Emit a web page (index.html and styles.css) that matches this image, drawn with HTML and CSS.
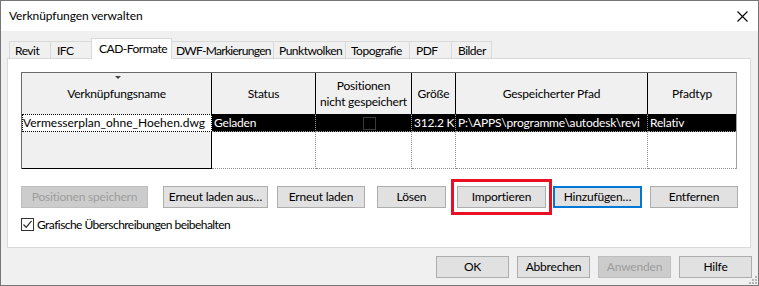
FILE: index.html
```html
<!DOCTYPE html>
<html lang="de">
<head>
  <meta charset="UTF-8" />
  <title>Verknüpfungen verwalten</title>
  <link rel="stylesheet" href="styles.css">
</head>
<body>
  <div class="window">
    <div class="titlebar">
      <span class="title">Verknüpfungen verwalten</span>
      <svg class="close" width="11" height="11" viewBox="0 0 11 11">
        <path d="M0.5 0.5 L10.5 10.5 M10.5 0.5 L0.5 10.5" stroke="#000" stroke-width="1.1" fill="none"/>
      </svg>
    </div>

    <div class="client">
      <div class="tabs">
        <div class="tab tab-revit">Revit</div>
        <div class="tab tab-ifc">IFC</div>
        <div class="tab tab-active">CAD-Formate</div>
        <div class="tab tab-dwf">DWF-Markierungen</div>
        <div class="tab tab-punkt">Punktwolken</div>
        <div class="tab tab-topo">Topografie</div>
        <div class="tab tab-pdf">PDF</div>
        <div class="tab tab-bilder">Bilder</div>
      </div>

      <div class="panel">
        <div class="grid">
          <div class="hcell sortable">Verknüpfungsname<span class="sort-arrow"></span></div>
          <div class="hcell">Status</div>
          <div class="hcell">Positionen<br>nicht gespeichert</div>
          <div class="hcell">Größe</div>
          <div class="hcell">Gespeicherter Pfad</div>
          <div class="hcell last">Pfadtyp</div>

          <div class="cell focus">Vermesserplan_ohne_Hoehen.dwg</div>
          <div class="cell sel">Geladen</div>
          <div class="cell sel center"><span class="mini-box"></span></div>
          <div class="cell sel">312.2 K</div>
          <div class="cell sel">P:\APPS\programme\autodesk\revi</div>
          <div class="cell sel last">Relativ</div>

          <div class="cell rowhead"></div>
          <div class="cell empty"></div>
          <div class="cell empty"></div>
          <div class="cell empty"></div>
          <div class="cell empty"></div>
          <div class="cell empty last"></div>
        </div>

        <div class="actions">
          <button class="btn btn-save" disabled>Positionen speichern</button>
          <button class="btn btn-reload-from">Erneut laden aus…</button>
          <button class="btn btn-reload">Erneut laden</button>
          <button class="btn btn-unload">Lösen</button>
          <button class="btn btn-import">Importieren</button>
          <button class="btn btn-add">Hinzufügen…</button>
          <button class="btn btn-remove">Entfernen</button>
        </div>

        <label class="check">
          <span class="check-box">
            <svg width="11" height="11" viewBox="0 0 11 11">
              <path d="M1.5 5.5 L4.2 8.3 L9.5 1.8" stroke="#222" stroke-width="1.1" fill="none"/>
            </svg>
          </span>
          <span class="check-label">Grafische Überschreibungen beibehalten</span>
        </label>
      </div>

      <div class="footer">
        <button class="btn btn-footer">OK</button>
        <button class="btn btn-footer">Abbrechen</button>
        <button class="btn btn-footer" disabled>Anwenden</button>
        <button class="btn btn-footer">Hilfe</button>
      </div>
    </div>

    <svg class="grip" width="9" height="9" viewBox="0 0 9 9">
      <rect x="7" y="1" width="2" height="2" fill="#b4b4b4"/>
      <rect x="4" y="4" width="2" height="2" fill="#b4b4b4"/>
      <rect x="7" y="4" width="2" height="2" fill="#b4b4b4"/>
      <rect x="1" y="7" width="2" height="2" fill="#b4b4b4"/>
      <rect x="4" y="7" width="2" height="2" fill="#b4b4b4"/>
      <rect x="7" y="7" width="2" height="2" fill="#b4b4b4"/>
    </svg>
  </div>
</body>
</html>
```

FILE: styles.css
```css
body {
    margin: 0;
    font-family: Lato, 'Noto Sans', sans-serif;
    font-size: 12px;
    letter-spacing: -0.2px;
    color: #000;
    background: #fff;
}
.window {
    width: 759px;
    height: 286px;
    box-sizing: border-box;
    border: 1px solid #767676;
    display: flex;
    flex-direction: column;
    position: relative;
}
.titlebar {
    height: 30px;
    background: #fff;
    display: flex;
    align-items: center;
    padding: 0 10px 0 8px;
}
.title {
    flex: 1;
    padding-bottom: 1px;
    letter-spacing: -0.1px;
}
.client {
    flex: 1;
    background: #f0f0f0;
    padding: 7px 6px 0 6px;
}

/* tabs */
.tabs {
    display: flex;
    align-items: flex-end;
    height: 20px;
    padding-left: 2px;
}
.tab {
    box-sizing: border-box;
    flex-shrink: 0;
    height: 17px;
    border: 1px solid #d9d9d9;
    border-right: none;
    border-bottom: none;
    padding-left: 5px;
    display: flex;
    align-items: center;
    white-space: nowrap;
    letter-spacing: -0.5px;
    background: #f0f0f0;
}
.tab-revit { width: 41px; }
.tab-ifc { width: 41px; padding-left: 6px; }
.tab-active {
    width: 81px;
    height: 21px;
    margin-bottom: -1px;
    margin-right: -1px;
    border-right: 1px solid #d9d9d9;
    background: #fff;
    padding-left: 7px;
    padding-bottom: 2px;
    position: relative;
    z-index: 1;
}
.tab-dwf {
    width: 102px;
    padding-left: 4px;
    letter-spacing: -0.7px;
}
.tab-punkt { width: 72px; }
.tab-topo { width: 64px; }
.tab-pdf { width: 42px; padding-left: 6px; }
.tab-bilder {
    width: 41px;
    padding-left: 6px;
    border-right: 1px solid #d9d9d9;
}

.panel {
    box-sizing: border-box;
    width: 744px;
    height: 190px;
    background: #fff;
    border: 1px solid #d9d9d9;
    padding: 13px 0 0 13px;
}

/* list grid */
.grid {
    display: grid;
    grid-template-columns: 190px 104px 96px 44px 192px 88px;
    grid-template-rows: 41px 18px 37px;
    width: max-content;
    border-left: 1px solid #6a6a6a;
    border-top: 1px solid #6a6a6a;
    border-right: 1px solid #a0a0a0;
}
.hcell {
    box-sizing: border-box;
    background: #f0f0f0;
    border-right: 1px solid #000;
    display: flex;
    align-items: center;
    justify-content: center;
    text-align: center;
    line-height: 16px;
    padding-top: 1px;
}
.hcell.last { border-right: none; }
.sortable { position: relative; }
.sort-arrow {
    position: absolute;
    top: 3px;
    left: 93px;
    border-left: 3px solid transparent;
    border-right: 3px solid transparent;
    border-top: 3px solid #444;
}
.cell {
    box-sizing: border-box;
    white-space: nowrap;
    overflow: hidden;
    padding-left: 2px;
    line-height: 16px;
}
.cell.focus {
    background: #fff;
    border: 1px dotted #000;
    padding-left: 0;
    letter-spacing: 0;
}
.cell.sel {
    background: #000;
    color: #fff;
    border-right: 1px dotted #9a9a9a;
    border-top: 1px dotted #000;
    border-bottom: 1px dotted #9a9a9a;
}
.cell.sel.last { border-right: none; }
.cell.center {
    display: flex;
    justify-content: center;
    align-items: center;
}
.mini-box {
    width: 11px;
    height: 11px;
    border: 1px solid #3a3a3a;
    margin-left: 10px;
}
.cell.rowhead {
    background: #f0f0f0;
    border-right: 1px solid #000;
    border-bottom: 1px solid #000;
}
.cell.empty {
    background: #fff;
    border-right: 1px dotted #8c8c8c;
    border-bottom: 1px dotted #8c8c8c;
}
.cell.empty.last { border-right: none; }

/* buttons */
.btn {
    box-sizing: border-box;
    height: 22px;
    background: #e1e1e1;
    border: 1px solid #adadad;
    font-family: inherit;
    font-size: 12px;
    letter-spacing: -0.2px;
    color: #000;
    padding: 0 0 1px 0;
    margin: 0;
}
.btn:disabled {
    background: #cccccc;
    border-color: #bfbfbf;
    color: #9d9d9d;
}
.actions {
    display: flex;
    align-items: flex-start;
    margin-top: 17px;
}
.btn-save { width: 127px; }
.btn-reload-from { width: 105px; margin-left: 15px; }
.btn-reload { width: 88px; margin-left: 9px; }
.btn-unload { width: 69px; margin-left: 12px; }
.btn-import {
    width: 89px;
    margin-left: 11px;
    position: relative;
}
.btn-import::after {
    content: "";
    position: absolute;
    top: -8px;
    bottom: -8px;
    left: -7px;
    right: -7px;
    border: 3px solid #e81123;
}
.btn-add {
    width: 89px;
    margin-left: 7px;
    border: 2px solid #0078d7;
}
.btn-remove { width: 88px; margin-left: 8px; }

.check {
    display: flex;
    align-items: center;
    gap: 3px;
    margin-top: 10px;
    height: 13px;
}
.check-box {
    box-sizing: border-box;
    width: 13px;
    height: 13px;
    border: 1px solid #333;
    background: #fff;
    display: flex;
}
.check-label {
    letter-spacing: -0.55px;
}

.footer {
    display: flex;
    justify-content: flex-end;
    gap: 8px;
    margin-top: 8px;
}
.btn-footer { width: 73px; }

.grip {
    position: absolute;
    right: 1px;
    bottom: 1px;
}
```
